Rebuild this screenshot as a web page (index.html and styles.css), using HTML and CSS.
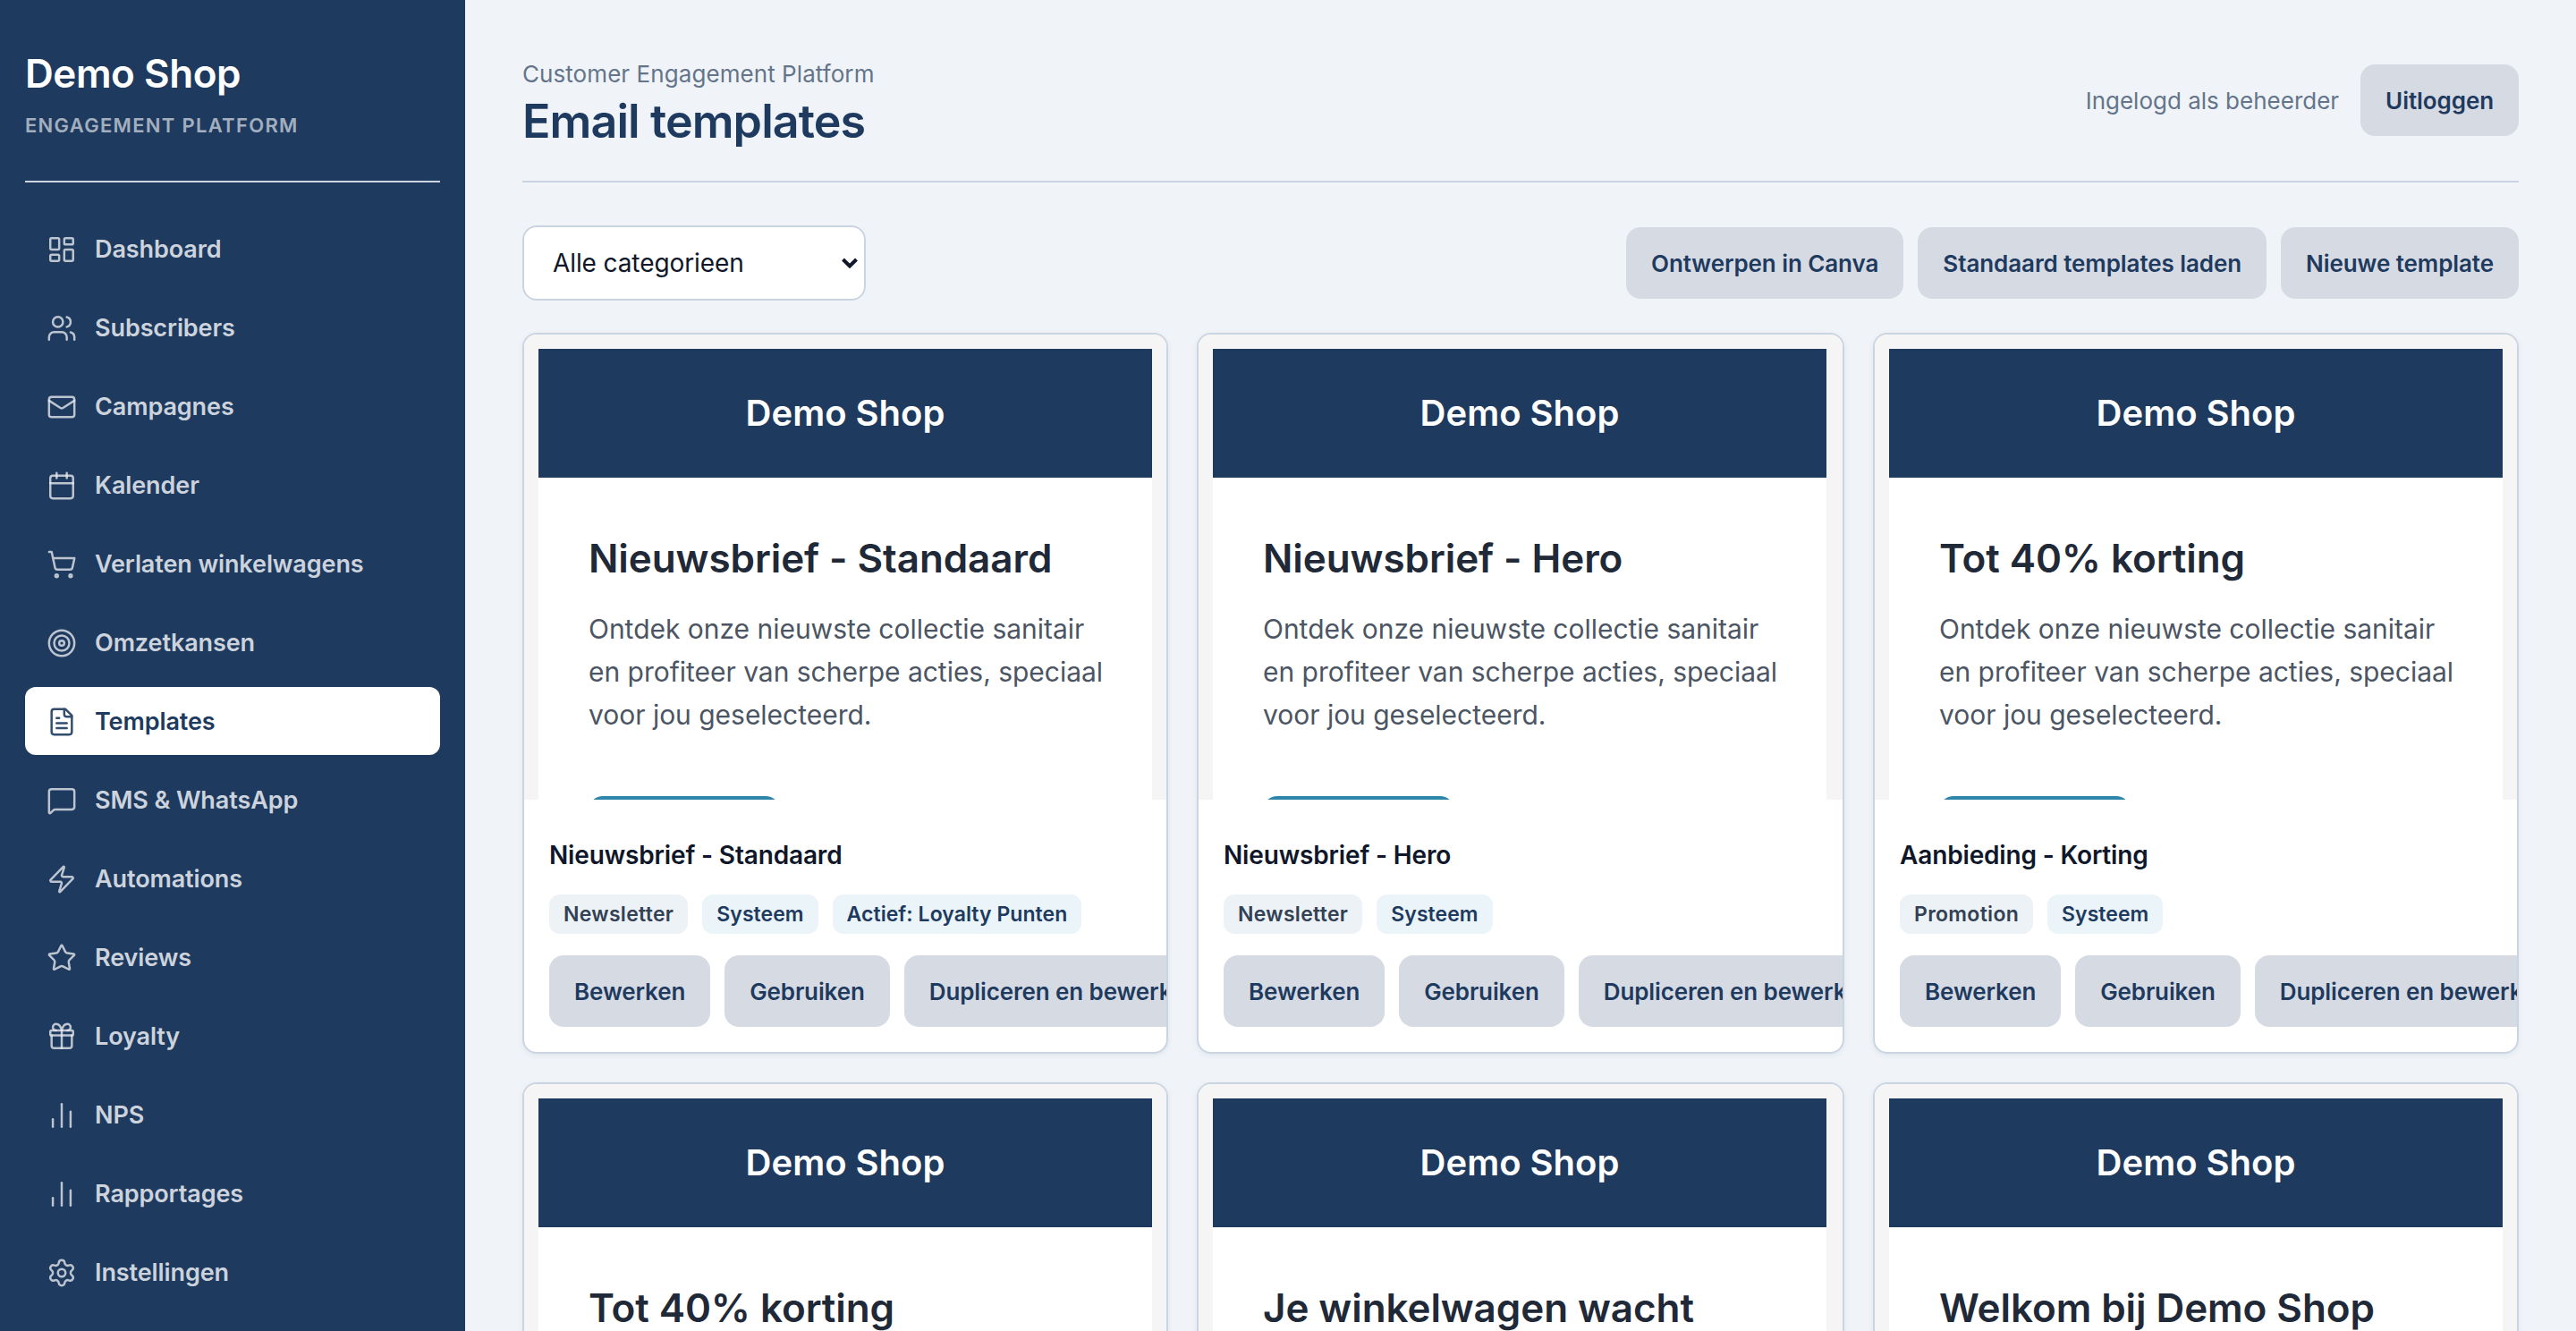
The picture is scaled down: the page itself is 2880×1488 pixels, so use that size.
FILE: index.html
```html
<!DOCTYPE html>
<html lang="nl">
<head>
<meta charset="utf-8">
<title>Email templates</title>
<link rel="stylesheet" href="styles.css">
</head>
<body>
<div class="app">
  <aside class="sidebar">
    <div class="brand">
      <div class="brand-name">Demo Shop</div>
      <div class="brand-sub">Engagement Platform</div>
    </div>
    <nav class="nav">
      <a class="nav-item"><svg class="icon" viewBox="0 0 24 24"><rect width="7" height="9" x="3" y="3" rx="1"/><rect width="7" height="5" x="14" y="3" rx="1"/><rect width="7" height="9" x="14" y="12" rx="1"/><rect width="7" height="5" x="3" y="16" rx="1"/></svg>Dashboard</a>
      <a class="nav-item"><svg class="icon" viewBox="0 0 24 24"><path d="M16 21v-2a4 4 0 0 0-4-4H6a4 4 0 0 0-4 4v2"/><circle cx="9" cy="7" r="4"/><path d="M22 21v-2a4 4 0 0 0-3-3.87"/><path d="M16 3.13a4 4 0 0 1 0 7.75"/></svg>Subscribers</a>
      <a class="nav-item"><svg class="icon" viewBox="0 0 24 24"><rect width="20" height="16" x="2" y="4" rx="2"/><path d="m22 7-8.97 5.7a1.94 1.94 0 0 1-2.06 0L2 7"/></svg>Campagnes</a>
      <a class="nav-item"><svg class="icon" viewBox="0 0 24 24"><path d="M8 2v4"/><path d="M16 2v4"/><rect width="18" height="18" x="3" y="4" rx="2"/><path d="M3 10h18"/></svg>Kalender</a>
      <a class="nav-item"><svg class="icon" viewBox="0 0 24 24"><circle cx="8" cy="21" r="1"/><circle cx="19" cy="21" r="1"/><path d="M2.05 2.05h2l2.66 12.42a2 2 0 0 0 2 1.58h9.78a2 2 0 0 0 1.95-1.57l1.65-7.43H5.12"/></svg>Verlaten winkelwagens</a>
      <a class="nav-item"><svg class="icon" viewBox="0 0 24 24"><circle cx="12" cy="12" r="10"/><circle cx="12" cy="12" r="6"/><circle cx="12" cy="12" r="2"/></svg>Omzetkansen</a>
      <a class="nav-item active"><svg class="icon" viewBox="0 0 24 24"><path d="M15 2H6a2 2 0 0 0-2 2v16a2 2 0 0 0 2 2h12a2 2 0 0 0 2-2V7Z"/><path d="M14 2v4a2 2 0 0 0 2 2h4"/><path d="M10 9H8"/><path d="M16 13H8"/><path d="M16 17H8"/></svg>Templates</a>
      <a class="nav-item"><svg class="icon" viewBox="0 0 24 24"><path d="M22 17a2 2 0 0 1-2 2H6.83a2 2 0 0 0-1.42.59l-2.2 2.2A.71.71 0 0 1 2 21.29V5a2 2 0 0 1 2-2h16a2 2 0 0 1 2 2z"/></svg>SMS &amp; WhatsApp</a>
      <a class="nav-item"><svg class="icon" viewBox="0 0 24 24"><path d="M4 14a1 1 0 0 1-.78-1.63l9.9-10.2a.5.5 0 0 1 .86.46l-1.92 6.02A1 1 0 0 0 13 10h7a1 1 0 0 1 .78 1.63l-9.9 10.2a.5.5 0 0 1-.86-.46l1.92-6.02A1 1 0 0 0 11 14z"/></svg>Automations</a>
      <a class="nav-item"><svg class="icon" viewBox="0 0 24 24"><path d="M11.525 2.295a.53.53 0 0 1 .95 0l2.31 4.679a2.123 2.123 0 0 0 1.595 1.16l5.166.756a.53.53 0 0 1 .294.904l-3.736 3.638a2.123 2.123 0 0 0-.611 1.878l.882 5.14a.53.53 0 0 1-.771.56l-4.618-2.428a2.122 2.122 0 0 0-1.973 0L6.396 21.01a.53.53 0 0 1-.77-.56l.881-5.139a2.122 2.122 0 0 0-.611-1.879L2.16 9.795a.53.53 0 0 1 .294-.906l5.165-.755a2.122 2.122 0 0 0 1.597-1.16z"/></svg>Reviews</a>
      <a class="nav-item"><svg class="icon" viewBox="0 0 24 24"><rect x="3" y="7" width="18" height="4" rx="1"/><path d="M12 7v14"/><path d="M20 11v8a2 2 0 0 1-2 2H6a2 2 0 0 1-2-2v-8"/><path d="M7.5 7a1 1 0 0 1 0-5A4.8 8 0 0 1 12 7a4.8 8 0 0 1 4.5-5 1 1 0 0 1 0 5"/></svg>Loyalty</a>
      <a class="nav-item"><svg class="icon" viewBox="0 0 24 24"><path d="M5 21v-6"/><path d="M12 21V3"/><path d="M19 21V9"/></svg>NPS</a>
      <a class="nav-item"><svg class="icon" viewBox="0 0 24 24"><path d="M5 21v-6"/><path d="M12 21V3"/><path d="M19 21V9"/></svg>Rapportages</a>
      <a class="nav-item"><svg class="icon" viewBox="0 0 24 24"><path d="M9.671 4.136a2.34 2.34 0 0 1 4.659 0 2.34 2.34 0 0 0 3.319 1.915 2.34 2.34 0 0 1 2.33 4.033 2.34 2.34 0 0 0 0 3.831 2.34 2.34 0 0 1-2.33 4.033 2.34 2.34 0 0 0-3.319 1.915 2.34 2.34 0 0 1-4.659 0 2.34 2.34 0 0 0-3.32-1.915 2.34 2.34 0 0 1-2.33-4.033 2.34 2.34 0 0 0 0-3.831A2.34 2.34 0 0 1 6.35 6.051a2.34 2.34 0 0 0 3.319-1.915"/><circle cx="12" cy="12" r="3"/></svg>Instellingen</a>
    </nav>
  </aside>
  <main class="main">
    <header class="header">
      <div>
        <div class="eyebrow">Customer Engagement Platform</div>
        <h1 class="title">Email templates</h1>
      </div>
      <div class="session"><span class="muted">Ingelogd als beheerder</span><button class="btn">Uitloggen</button></div>
    </header>
    <div class="toolbar">
      <div class="select" role="combobox"><span>Alle categorieen</span><svg class="chevron" viewBox="0 0 20 14"><path d="M2.5 3 10 10.5 17.5 3"/></svg></div>
      <div class="actions"><button class="btn">Ontwerpen in Canva</button><button class="btn">Standaard templates laden</button><button class="btn">Nieuwe template</button></div>
    </div>
    <section class="grid">
      <article class="card">
        <div class="preview"><div class="mail"><div class="mail-head">Demo Shop</div><div class="mail-body"><h2 class="mail-title">Nieuwsbrief - Standaard</h2><p class="mail-text">Ontdek onze nieuwste collectie sanitair en profiteer van scherpe acties, speciaal voor jou geselecteerd.</p><span class="mail-cta"></span></div></div></div>
        <div class="info"><h3 class="name">Nieuwsbrief - Standaard</h3><div class="tags"><span class="tag">Newsletter</span><span class="tag accent">Systeem</span><span class="tag accent">Actief: Loyalty Punten</span></div><div class="row"><button class="btn">Bewerken</button><button class="btn">Gebruiken</button><button class="btn">Dupliceren en bewerken</button></div></div>
      </article>
      <article class="card">
        <div class="preview"><div class="mail"><div class="mail-head">Demo Shop</div><div class="mail-body"><h2 class="mail-title">Nieuwsbrief - Hero</h2><p class="mail-text">Ontdek onze nieuwste collectie sanitair en profiteer van scherpe acties, speciaal voor jou geselecteerd.</p><span class="mail-cta"></span></div></div></div>
        <div class="info"><h3 class="name">Nieuwsbrief - Hero</h3><div class="tags"><span class="tag">Newsletter</span><span class="tag accent">Systeem</span></div><div class="row"><button class="btn">Bewerken</button><button class="btn">Gebruiken</button><button class="btn">Dupliceren en bewerken</button></div></div>
      </article>
      <article class="card">
        <div class="preview"><div class="mail"><div class="mail-head">Demo Shop</div><div class="mail-body"><h2 class="mail-title">Tot 40% korting</h2><p class="mail-text">Ontdek onze nieuwste collectie sanitair en profiteer van scherpe acties, speciaal voor jou geselecteerd.</p><span class="mail-cta"></span></div></div></div>
        <div class="info"><h3 class="name">Aanbieding - Korting</h3><div class="tags"><span class="tag">Promotion</span><span class="tag accent">Systeem</span></div><div class="row"><button class="btn">Bewerken</button><button class="btn">Gebruiken</button><button class="btn">Dupliceren en bewerken</button></div></div>
      </article>
      <article class="card">
        <div class="preview"><div class="mail"><div class="mail-head">Demo Shop</div><div class="mail-body"><h2 class="mail-title">Tot 40% korting</h2></div></div></div>
      </article>
      <article class="card">
        <div class="preview"><div class="mail"><div class="mail-head">Demo Shop</div><div class="mail-body"><h2 class="mail-title">Je winkelwagen wacht</h2></div></div></div>
      </article>
      <article class="card">
        <div class="preview"><div class="mail"><div class="mail-head">Demo Shop</div><div class="mail-body"><h2 class="mail-title">Welkom bij Demo Shop</h2></div></div></div>
      </article>
    </section>
  </main>
</div>
</body>
</html>
```
FILE: styles.css
```css
* { box-sizing: border-box; margin: 0; }

body {
  font-family: Inter, "Liberation Sans", sans-serif;
  font-size: 28px;
  color: #0f172a;
  background: #f0f4f9;
}

.app { display: flex; height: 1488px; overflow: hidden; }

/* Sidebar */
.sidebar {
  flex: none;
  width: 520px;
  padding: 0 28px;
  background: #1e3a5f;
}
.brand {
  height: 204px;
  padding-top: 56px;
  border-bottom: 2px solid #cbd5e1;
}
.brand-name {
  font-size: 44px;
  font-weight: 600;
  line-height: 53px;
  letter-spacing: -0.44px;
  color: #fff;
}
.brand-sub {
  margin-top: 18px;
  font-size: 22px;
  font-weight: 600;
  line-height: 27px;
  letter-spacing: 1.3px;
  text-transform: uppercase;
  color: rgba(255, 255, 255, 0.6);
}
.nav { display: flex; flex-direction: column; gap: 12px; padding-top: 36px; }
.nav-item {
  display: flex;
  align-items: center;
  gap: 20px;
  height: 76px;
  padding: 1px 24px 0;
  border-radius: 12px;
  font-size: 27px;
  font-weight: 600;
  letter-spacing: -0.1px;
  color: rgba(255, 255, 255, 0.78);
}
.nav-item.active { background: #fff; color: #1e3a5f; }
.icon {
  flex: none;
  width: 34px;
  height: 34px;
  fill: none;
  stroke: currentColor;
  stroke-width: 1.75;
  stroke-linecap: round;
  stroke-linejoin: round;
  opacity: 0.9;
}

/* Page header and toolbar */
.main { flex: 1; min-width: 0; padding: 0 64px; }
.header {
  display: flex;
  justify-content: space-between;
  height: 204px;
  border-bottom: 2px solid #cbd5e1;
}
.eyebrow {
  padding-top: 67px;
  font-size: 26px;
  line-height: 32px;
  letter-spacing: 0.07px;
  color: #64748b;
}
.title {
  margin-top: 5px;
  font-size: 52px;
  font-weight: 600;
  line-height: 64px;
  letter-spacing: -0.92px;
  color: #1e3a5f;
}
.session { display: flex; align-items: center; gap: 24px; height: 80px; margin-top: 72px; }
.muted { font-size: 26px; color: #64748b; }
.btn {
  flex: none;
  height: 80px;
  padding: 0 28px;
  border: 0;
  border-radius: 16px;
  background: #d6dbe3;
  font: 600 26px Inter, "Liberation Sans", sans-serif;
  letter-spacing: -0.12px;
  color: #1e3a5f;
  white-space: nowrap;
}
.session .btn, .actions .btn { letter-spacing: -0.08px; }
.toolbar {
  display: flex;
  align-items: center;
  justify-content: space-between;
  height: 84px;
  margin-top: 48px;
}
.select {
  display: flex;
  align-items: center;
  justify-content: space-between;
  width: 384px;
  height: 84px;
  padding: 0 6px 0 32px;
  border: 2px solid #cbd5e1;
  border-radius: 16px;
  background: #fff;
  letter-spacing: -0.1px;
}
.chevron { width: 20px; height: 14px; fill: none; stroke: #0f172a; stroke-width: 4; }
.actions { display: flex; gap: 16px; }

/* Template cards */
.grid {
  display: grid;
  grid-template-columns: 722px 724px 722px;
  gap: 32px;
  margin-top: 36px;
}
.card {
  height: 806px;
  overflow: hidden;
  border: 2px solid #cbd5e1;
  border-radius: 16px;
  background: #fff;
  box-shadow: 0 2px 6px rgba(30, 58, 95, 0.08);
}
.preview { height: 520px; padding: 16px 16px 0; overflow: hidden; background: #f5f5f5; }
.mail { width: 686px; height: 640px; background: #fff; }
.mail-head {
  height: 144px;
  font-size: 40px;
  font-weight: 600;
  line-height: 144px;
  text-align: center;
  color: #fff;
  background: #1e3a5f;
}
.mail-body { padding: 56px 44px 0 56px; }
.mail-title {
  font-size: 44px;
  font-weight: 600;
  line-height: 68px;
  letter-spacing: -0.08px;
  color: #1f2937;
}
.mail-text {
  margin-top: 21px;
  font-size: 30px;
  line-height: 48px;
  letter-spacing: -0.02px;
  color: #4b5563;
}
.mail-cta {
  display: block;
  width: 214px;
  height: 88px;
  margin-top: 67px;
  border-radius: 16px;
  background: #2e86ab;
}
.info { padding: 40px 28px 28px; }
.name { font-size: 28px; font-weight: 600; line-height: 44px; letter-spacing: -0.15px; }
.tags { display: flex; gap: 16px; margin-top: 22px; }
.tag {
  height: 44px;
  padding: 0 16px;
  border-radius: 12px;
  background: #edf2f7;
  font-size: 23px;
  font-weight: 600;
  line-height: 44px;
  letter-spacing: 0.3px;
  color: #334155;
}
.tag.accent { background: #eaf4f9; letter-spacing: 0.05px; color: #1e3a5f; }
.row { display: flex; gap: 16px; margin-top: 24px; }
```
